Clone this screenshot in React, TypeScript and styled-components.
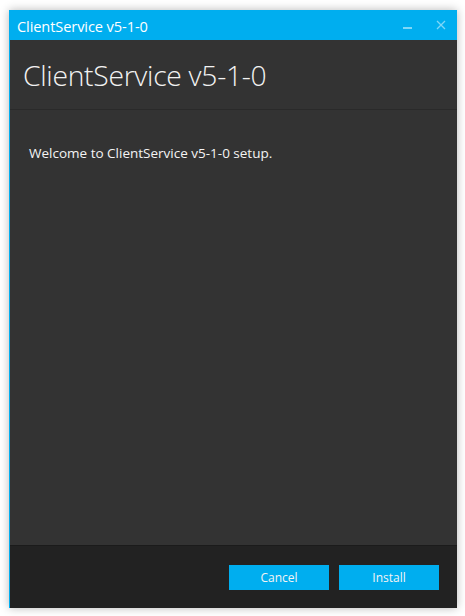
import React from "react";
import styled, { createGlobalStyle } from "styled-components";

const Global = createGlobalStyle`
  html, body { margin: 0; padding: 0; background: #ffffff; }
  body { font-family: "Open Sans", "Noto Sans", sans-serif; }
`;

const Page = styled.div`
  width: 465px;
  height: 616px;
  padding: 10px 0 0 9px;
  box-sizing: border-box;
`;

const Window = styled.div`
  width: 448px;
  height: 598px;
  display: flex;
  flex-direction: column;
  border-left: 1px solid #00aeef;
  box-sizing: border-box;
  box-shadow: 0 0 9px rgba(0, 0, 0, 0.28);
  background: #333333;
`;

const TitleBar = styled.div`
  height: 30px;
  flex: none;
  display: flex;
  align-items: center;
  background: #00aeef;
  padding: 0 0 0 7px;
  color: #ffffff;
  font-size: 14.6px;
`;

const TitleText = styled.span`
  flex: 1;
  margin-top: 1px;
  letter-spacing: -0.1px;
`;

const WinButton = styled.button`
  width: 33px;
  height: 30px;
  border: 0;
  padding: 0;
  background: transparent;
  display: flex;
  align-items: center;
  justify-content: center;
  color: #7fd7f7;
`;

const Header = styled.div`
  height: 69px;
  flex: none;
  display: flex;
  align-items: center;
  padding-left: 13px;
  border-bottom: 1px solid #2a2a2a;
  background: #333333;
`;

const Heading = styled.h1`
  margin: 0;
  font-weight: 300;
  font-size: 28.3px;
  color: #f2f2f2;
  letter-spacing: -0.3px;
`;

const Content = styled.div`
  flex: 1;
  padding: 34px 19px;
  background: #333333;
`;

const Welcome = styled.p`
  margin: 0;
  font-size: 13.5px;
  color: #f4f4f4;
`;

const Footer = styled.div`
  height: 63px;
  flex: none;
  box-sizing: border-box;
  border-top: 1px solid #1b1b1b;
  background: #222222;
  display: flex;
  justify-content: flex-end;
  align-items: flex-start;
  gap: 10px;
  padding: 19px 18px 0 0;
`;

const ActionButton = styled.button`
  width: 100px;
  height: 25px;
  border: 0;
  background: #00aeef;
  color: #f4f4f4;
  font-family: "Open Sans", "Noto Sans", sans-serif;
  font-size: 12px;
  padding: 0;
`;

export default function App() {
  return (
    <>
      <Global />
      <Page>
        <Window>
          <TitleBar>
            <TitleText>ClientService v5-1-0</TitleText>
            <WinButton aria-label="Minimize">
              <svg width="10" height="10" viewBox="0 0 10 10">
                <rect x="0" y="7" width="9" height="2" fill="currentColor" />
              </svg>
            </WinButton>
            <WinButton aria-label="Close">
              <svg width="10" height="10" viewBox="0 0 10 10">
                <path d="M1 1 L9 9 M9 1 L1 9" stroke="currentColor" strokeWidth="1.3" />
              </svg>
            </WinButton>
          </TitleBar>
          <Header>
            <Heading>ClientService v5-1-0</Heading>
          </Header>
          <Content>
            <Welcome>Welcome to ClientService v5-1-0 setup.</Welcome>
          </Content>
          <Footer>
            <ActionButton>Cancel</ActionButton>
            <ActionButton>Install</ActionButton>
          </Footer>
        </Window>
      </Page>
    </>
  );
}
